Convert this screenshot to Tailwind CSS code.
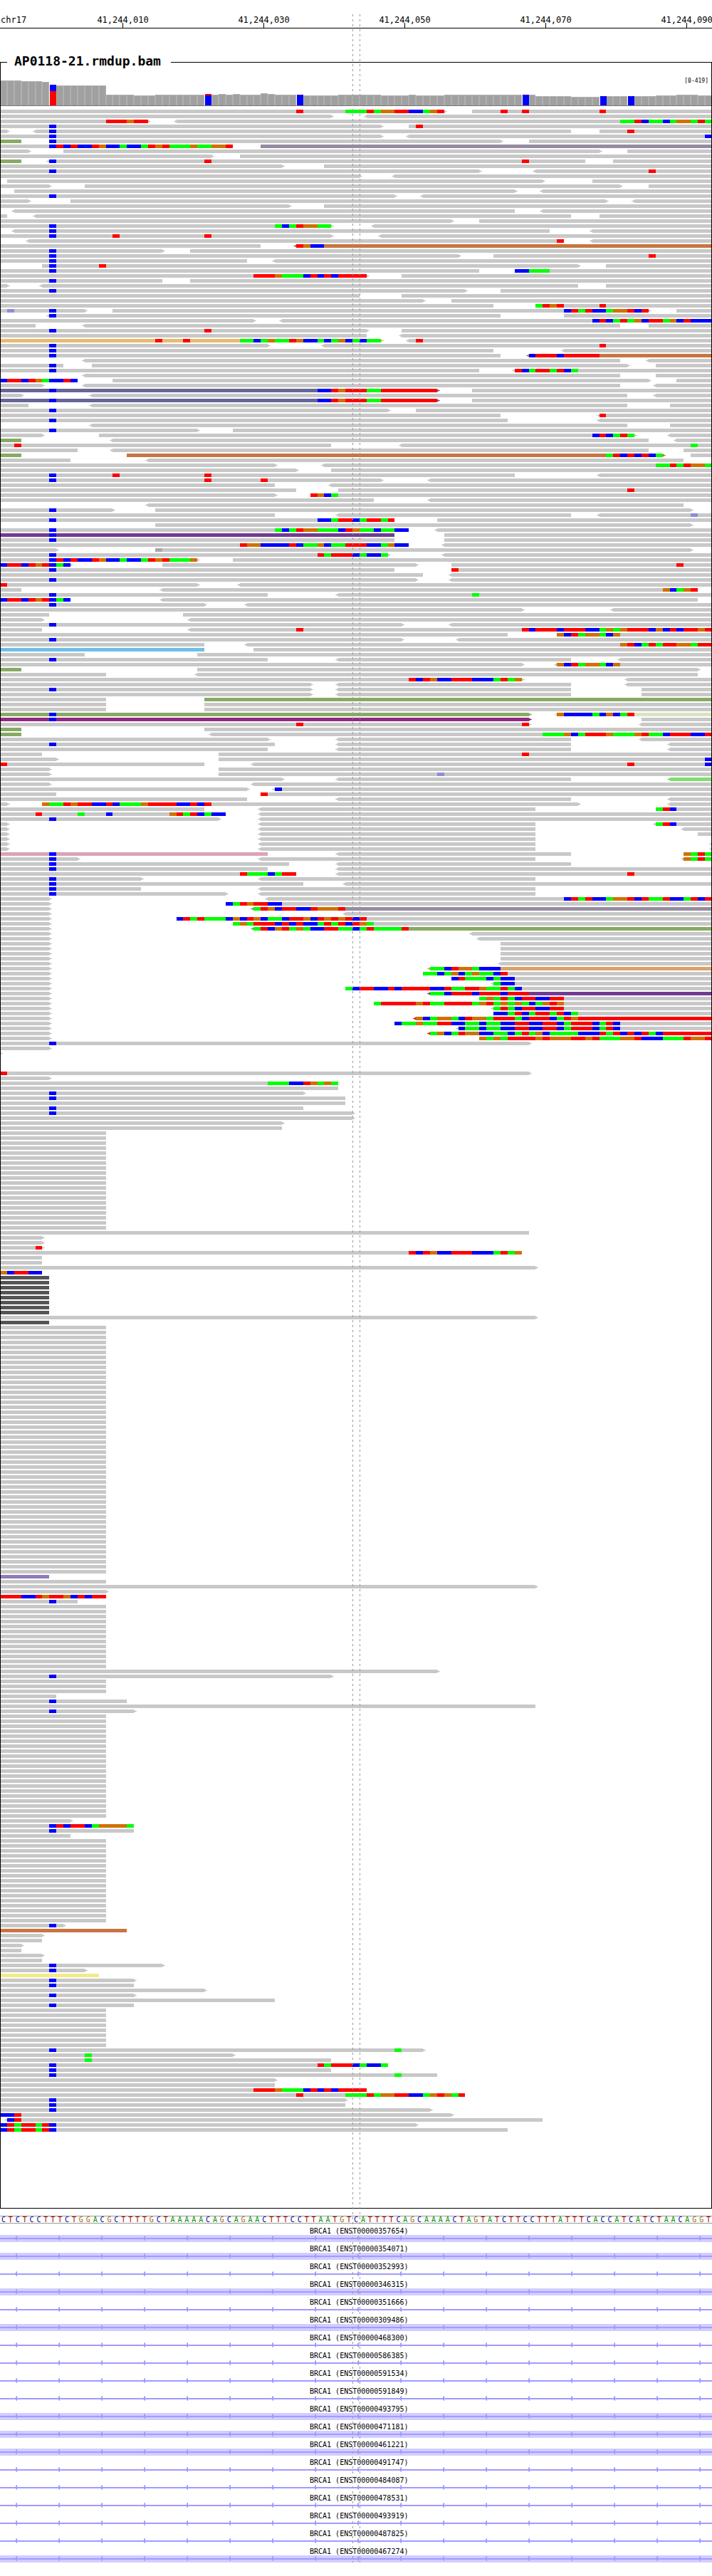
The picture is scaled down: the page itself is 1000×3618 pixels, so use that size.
<!DOCTYPE html>
<html lang="en">
<head>
<meta charset="utf-8">
<meta name="viewport" content="width=device-width, initial-scale=1">
<title>AP0118-21.rmdup.bam</title>
<script src="https://cdn.jsdelivr.net/npm/@tailwindcss/browser@4"></script>
</head>
<body class="bg-white text-black font-['DejaVu_Sans_Mono',monospace]">
<main class="relative w-full overflow-hidden pb-5">

  <!-- Coordinate ruler -->
  <header class="relative h-10 border-b border-black text-xs">
    <span class="absolute left-px top-5 leading-4">chr17</span>
    <div id="ticks"></div>
  </header>

  <!-- Alignment track -->
  <section class="relative mt-[47px]">
    <div class="flex h-[25px] items-start">
      <span class="w-[1%] border-t border-black"></span>
      <h1 class="-mt-3 w-[230px] pl-[10px] text-lg font-bold leading-[22px]">AP0118-21.rmdup.bam</h1>
      <span class="flex-1 border-t border-black"></span>
    </div>
    <div class="relative">
      <svg id="coverage" class="block w-full" height="37" viewBox="0 0 1000 37" preserveAspectRatio="none" shape-rendering="crispEdges"></svg>
      <span class="absolute right-[5px] -top-[3px] text-[8px] leading-[10px]">[0-419]</span>
    </div>
    <svg id="reads" class="mt-[5px] block w-full" preserveAspectRatio="none" shape-rendering="crispEdges"></svg>
    <div class="h-[106px]"></div>
    <div class="pointer-events-none absolute inset-0 border-x border-b border-black"></div>
  </section>

  <!-- Reference sequence -->
  <div id="sequence" class="mt-[10px] grid h-[11px] grid-cols-[repeat(101,minmax(0,1fr))] border-y border-[#999] text-center text-[10px] leading-[9px]"></div>

  <!-- Transcripts -->
  <ul id="genes" class="mt-px"></ul>

  <!-- Centre base guides -->
  <div class="pointer-events-none absolute bottom-5 left-[49.5%] top-5 w-px bg-[repeating-linear-gradient(to_bottom,#999_0_3px,transparent_3px_7px)]"></div>
  <div class="pointer-events-none absolute bottom-5 left-[50.5%] top-5 w-px bg-[repeating-linear-gradient(to_bottom,#999_0_3px,transparent_3px_7px)]"></div>
</main>

<script>
const px = b => Math.floor(b * 9.9 + 0.5);
const rect = (x, y, w, h, c) => `<rect x="${x}" y="${y}" width="${w}" height="${h}" fill="${c}"/>`;

// Ruler ticks, one every 20 bases
document.getElementById('ticks').innerHTML = [10, 30, 50, 70, 90].map((n, i) =>
  `<div class="absolute bottom-0 flex w-0 flex-col items-center" style="left:${17.25 + i * 19.8}%"><span class="leading-4">41,244,0${n}</span><i class="-mt-1 h-[7px] w-px bg-black"></i></div>`).join('');

// Coverage: [first base, last base, top]
const cover = [[0,2,1],[3,5,2],[6,6,3],[8,14,8],[15,18,21],[19,21,22],[22,28,21],[30,30,21],[31,31,20],[32,32,21],[33,33,20],[34,36,21],[37,37,19],[38,38,20],[39,41,21],[43,47,22],[48,53,21],[54,57,22],[58,58,21],[59,62,22],[63,73,21],[75,75,21],[76,80,23],[81,84,24],[86,88,23],[90,92,23],[93,95,22],[96,98,21],[99,100,22]];
let cov = '';
for (const [a, z, t] of cover) for (let b = a; b <= z; b++) {
  cov += rect(px(b), t, px(b + 1) - px(b), 36 - t, '#b0b0b0') + rect(px(b) + 1, t + 1, px(b + 1) - px(b) - 2, 35 - t, '#a0a0a0');
}
const split = (b, parts) => parts.forEach(([t, e, c]) => cov += rect(px(b) + 1, t, 9, e - t, c));
split(7, [[7, 16, '#00f'], [16, 36, '#f00']]);
split(29, [[20, 22, '#f00'], [22, 36, '#00f']]);
for (const [b, t] of [[42, 21], [74, 21], [85, 23], [89, 23]]) {
  split(b, [[t, 36, '#00f']]);
  cov += rect(px(b) + 5, t, 1, 1, '#f00');
}
cov += rect(0, 36, 1000, 1, '#777');
document.getElementById('coverage').innerHTML = cov;

// Reads. Span: [<]start-end[>][colour]; bases: position + letters. "*n" repeats the line.
const data = `
0-63> 67-101 42r 49gggrgoorrbbgor 71r 74r 85r
0-47> <52-101
0-21> <25-101 15rrrorr 88ggrbggbgoogrg
0-54> 58-101 7b 59r
0-1> <5-81 85-101 7b 89r
0-54> <58-101 7b 100b
0-3G 7-71> 75-101 7b
0-33 37-101V 7brbrbbrobbgbbgrorgggoggoor
0-4> 9-85> 89-101
0-30> 34-101
0-3G <7-83 87-101 7b 29r 74r
0-40> 46-101
0-68> <76-101 7b 92r
0-51> <56-101
1-77> 84-101
0-7> 12-88> 92-101
2-73> <77-101
0-56> <60-101 7b
0-4> 10-86> <90-101
0-41> 46-101
<2-73 <77-101
0-1 <5-81 85-101
0-64> 68-101
0-47> <53-101 7b 39gbgroogg
<2-78 <84-101 7b
0-47> <54-101 7b 16r 29r
<4-80 <84-101 79r
0-37 <42-101T 42robb
0-23> 27-101 7b
0-65> 70-101 7b 92r
0-35 <39-101 7b
6-82> 86-101 7b 14r
0-68 73-101 7b 73bbggg
0-52> 57-101 36rrrogggbrbrbrrrr
0-23 27-101 7b
0-1> <6-82 86-101
0-66> 71-101 7b
0-51 57-101
0-60> 64-101
0-70 76-101 76gror 85r
0-12> 16-92> 96-101 1v 7b 80brgrbbgoorbr
<7-71 80-101 7b
0-36> <40-101 84brbgrgobrrgobrbbb
0-5 <12-88 92-101
0-52> 57-101 7b 29r
0-52 <57-101
0-54>Y <58-101 22r 26r 34ggbgoggrobbgbgobgbgg 59r
0-38> <46-101 7b 85r
0-70 <80-101 7b
0-71 <75-101T 7b 75brrrbrrrrr
<12-88 <92-101
0-9 13-89> 93-101 7b
0-68 <73-101 7b 73rbgrrgrbg
<12-88 93-101
0-11 16-92> 96-101 0brrbrogbbrb
0-6> <12-88 <93-101
0-62>N 67-101 7b 45bbrorrrggrrrrrrrr
0-3> <13-89 <93-101
0-62>N 67-101 7b 45bbrorrrggrrrrrrrr
0-4 <13-89 95-101
0-55> 59-101 7b
0-71 <85-101 85r
0-72 <85-101 7b
<13-89 95-101
0-28> 33-101 7b
0-6> 14-90> <95-101 84brbgrg
0-3G <16-92 <96-101
0-47 <57-101 2r 98g
0-11 <16-92 97-101
0-3G 18-94>T 98-101 86grbrbrbg
0-10 <21-97
0-39> <46-101 93ggrgroog
0-42> 47-101
0-73 <85-101 7b 16r 29r
0-54> <61-101 7b 29r 37r
0-39 <47-101
0-42 48-101 89r
0-39> 44-101 44robg
0-53 <61-101
<21-97
0-16> 22-98> 7b
0-39 <48-81 <85-101 98v
0-56 62-101 7b 45bbgrrbgrrgr
22-98>
0-58 <62-101 7b 39gbgroogggbroggbggbb
0-56P 63-101 7b
0-56 63-101 7b
0-58 <63-101 34roobbbbrbggobggrrrbbgobb
0-8> 22-98> 22d
0-55> <63-101 7b 45rgrrrbgbbg
0-28> 33-101 7brbrbbrobbgbbgrorgggo
0-10> 23-59> 64-101 0brrbrorbgb 96r
0-56 64-101 7b 64r
0-60 <64-101
0-59> <64-101 7b
0-28> <34-101 0r
0-3 <23-99 94obgor
0-38 <48-101 7b 67g
0-10 <23-99 0brrbrorbgb
0-29> <35-101 7b
0-74> <87-101
0-7 26-101
0-6> <27-101
0-57> <64-101 7b
0-6 <27-101 42r 74rbrrrbrrrbbgogorrrbobrbrror
0-72 79-101 79obrgoogbo
0-57> <65-101 7b
0-29 <35-101 88orbgrgrroogrr
0-29S 36-101
0-12 28-101
0-38 <48-81 <88-101 7b
0-74> <79-101 79obrgoogbo
0-3G 28-99>
0-15 <28-99
0-74> <89-101 58rbrobbrrrbbbgrgo
0-44> <48-81 <89-101
0-44> <48-81 91-101 7b
0-44> <48-81 91-101
0-15 29-101G
0-15 29-101 *2
0-75>G <79-101L 7b 79obbbbgbobgr
0-75>M 91-101 7b
0-75> <91-101 42r 74r
0-3G 29-101
0-3G <30-101 77gggobgrrrogggorggbrrrbbr
0-38> <48-81 <91-101
0-39 <48-81 <95-101 7b
0-38 <48-81 <95-101
0-6 31-101 74r
0-8> 31-101 100b
0-29 <36-101 0r 89r 100b
0-7> 31-101
0-7> 31-101 62v
0-40> <48-81 <95-101E
0-7> <36-101
0-35> <39-101 39b
0-8 37-101 37r
0-35 <48-81 <95-101
0-1> 6-82> <95-101 6oggrorrbbrbgggorrrrbbrbr
0-29 <37-76 93-101 93grb
0-32 <37-101 5r 11g 15b 24orgrbgbb
0-31> <37-101 7b
0-1> <37-76 <93-101 93grb
0-1> <37-76 <97-101
0-1> <37-76 99-101
0-1> <37-76
0-1> <37-76 <101-101 *2
0-38K <48-81 97-101 7b 97ogrg
0-11> <37-76 <97-101 7b 97ogrg
0-41 <48-81 7b
0-38 <48-101 7b
0-42 <48-101 34rgggbgrr 89r
0-20> <37-76 7b
0-43 <49-101 7b
0-20 <37-76 7b
0-32> <37-76 7b
0-7> <38-101 80brgrbbgoorbrggrbbgrbr
0-7> 32-101 32bgrorrbb
0-7> <36-101V 36grobrrbbrooor
0-7> <49-101
0-7> 25-101 25brgrgggbobrobggbrrobrororbr
0-7> 33-101 33gogrrrbrbrbbgrgrbrog
0-7> <36-101G 36grborgogbbrrggbgrggggr
0-7> <67-101
0-7> <68-101
0-7> 71-101 *4
0-7> <71-101
0-7> <61-101W 61ggbroogbbb
0-7> 60-101 60ggbgobgoggbr
0-7> 64-101 64brgggbgbb
0-7> <70-101 70gbb
0-7> 49-101 49gbrrbbrbrrrrbbrggrroggrgb
0-7> <61-101P 61ggbrrrbrrrbrrr
0-7> 68-101 68gogrgbrrbbrr
0-7> 53-101 53grrrrrorggrrrrgorgogogbgoro
0-7> <70-101 70grgbrrbbrr
0-7> 70-101 70bbgrbgrrgrbg
0-7> <59-101R 59obgoogbroogrrrgbrrrbgro
0-7> 56-101 56bggoggrrbbggbggbbrrbbrrbgrrrbgrb
0-7> <65-101 65bggbggbbrrbbrrbgrrrbgrb
0-7> <61-101R 61gobgroobbggbgrgobggggbbbrgrbrbrgb
0-7> 68-101 68ogogrrrrorooorrorgggoorbbbgggroor
0-75> 7b
0-7>
0-0>
- *3
0-75> 0r
0-7>
0-48 38gggbbrogog
0-48
0-43> 7b
0-49 7b
0-49
0-43 7b
0-50> 7b
0-50>
0-40>
0-40
0-15 *20
0-75
0-6> *2
0-6> 5r
0-74 58rbrobbrrrbbbgrgo
0-6 *2
0-76>
0-6 0obrrbb
0-7D *8
0-76>
0-7D
0-15 *50
0-7U
0-15
0-76>
0-15>
0-15 0rrrbbrorrobrbrr
0-11 7b
0-15 *13
0-62>
0-47> 7b
0-15 *3
0-8
0-18 7b
0-76
0-19> 7b
0-15 *21
0-10>
0-19 7brbrrbgoooog
0-19 7b
0-10
0-15 *17
0-9> 7b
0-18T
0-6>
0-6
0-3>
0-3
0-6>
0-6
0-23> 7b
0-12> 7b
0-14Z
0-19> 7b
0-19 7b
0-29>
0-19> 7b
0-39
0-19 7b
0-15 *8
0-60> 7b 56g
0-33> 12g
0-47 12g
0-55 7b 45rgrrrbgbbg
0-47 7b
0-62 7b 56g
0-39>
0-39
0-52 36rrrogggbrbrbrrrr
0-66 42r 49gggrgoorrbbgorogr
0-49> 7b
0-49 7b
0-61> 7b
0-64> 0bbr
<1-77 1br
0-59> 0brgrrgrb
0-72 0brgrrgrb
`.trim().split('\n');
const baseColour = { r: '#f00', g: '#0f0', b: '#00f', o: '#d17105', v: '#8c8cdc', d: '#a8a8a8' };
const readColour = { '': '#c8c8c8', G: '#88aa64', V: '#968ca0', T: '#c87541', Y: '#e9bb70', N: '#666699', P: '#733a93', M: '#91297d', S: '#6fbfe6', K: '#dca3b5', L: '#d8e4be', E: '#7fdf6e', D: '#555', W: '#dca26a', R: '#f00', U: '#8f7bbb', Z: '#f3eb89' };
let row = 0, out = '';
for (const line of data) {
  const tokens = line.split(' ');
  const last = tokens[tokens.length - 1];
  const n = last[0] === '*' ? +last.slice(1) : 1;
  for (let i = 0; i < n; i++, row++) {
    const y = row * 7;
    for (const t of tokens) {
      let m;
      if (m = t.match(/^(<?)(\d+)-(\d+)(>?)([A-Z]?)$/)) {
        const a = px(+m[2]), z = px(+m[3]), c = readColour[m[5]];
        if (z > a) out += rect(a, y, z - a, 5, c);
        if (m[1]) out += rect(a - 2, y + 1, 2, 3, c) + rect(a - 4, y + 2, 2, 1, c);
        if (m[4]) out += rect(z, y + 1, 2, 3, c) + rect(z + 2, y + 2, 2, 1, c);
      } else if (m = t.match(/^(\d+)([a-z]+)$/)) {
        [...m[2]].forEach((k, j) => {
          const b = +m[1] + j;
          out += rect(px(b), y, px(b + 1) - px(b), 5, baseColour[k]);
        });
      }
    }
  }
}
const reads = document.getElementById('reads');
reads.setAttribute('height', row * 7);
reads.setAttribute('viewBox', `0 0 1000 ${row * 7}`);
reads.innerHTML = out;

// Reference bases
const letter = { A: 'text-[#009600]', C: 'text-[#000096]', G: 'text-[#a86410]', T: 'text-[#aa0000]' };
document.getElementById('sequence').innerHTML = [...'CTCTCCTTTCTGGACGCTTTTGCTAAAAACAGCAGAACTTTCCTTAATGTCATTTTCAGCAAAACTAGTATCTTCCTTTATTTCACCATCATCTAACAGGT']
  .map(c => `<span class="${letter[c]}">${c}</span>`).join('');

// Transcripts; true marks an exon covering the window
const genes = [['357654', true], ['354071', true], ['352993'], ['346315', true], ['351666'], ['309486', true], ['468300'], ['586385'], ['591534'], ['591849'], ['493795', true], ['471181', true], ['461221', true], ['491747'], ['484087'], ['478531'], ['493919'], ['487825'], ['467274', true]];
let arrows = '';
for (let x = 21; x < 1000; x += 60) arrows += rect(x + 2, 1, 1, 7, '#a09bff') + rect(x + 1, 2, 1, 5, '#a09bff') + rect(x, 4, 1, 2, '#a09bff');
document.getElementById('genes').innerHTML = genes.map(([id, exon]) =>
  `<li><div class="h-[15px] whitespace-nowrap pl-[43.5%] pt-1 text-[10px] leading-3">BRCA1 (ENST00000${id})</div><svg class="block w-full" height="10" viewBox="0 0 1000 10" preserveAspectRatio="none" shape-rendering="crispEdges">${exon ? rect(0, 0, 1000, 10, '#d2cdff') : ''}${rect(0, 4, 1000, 2, '#a09bff')}${arrows}</svg></li>`).join('');
</script>
</body>
</html>
